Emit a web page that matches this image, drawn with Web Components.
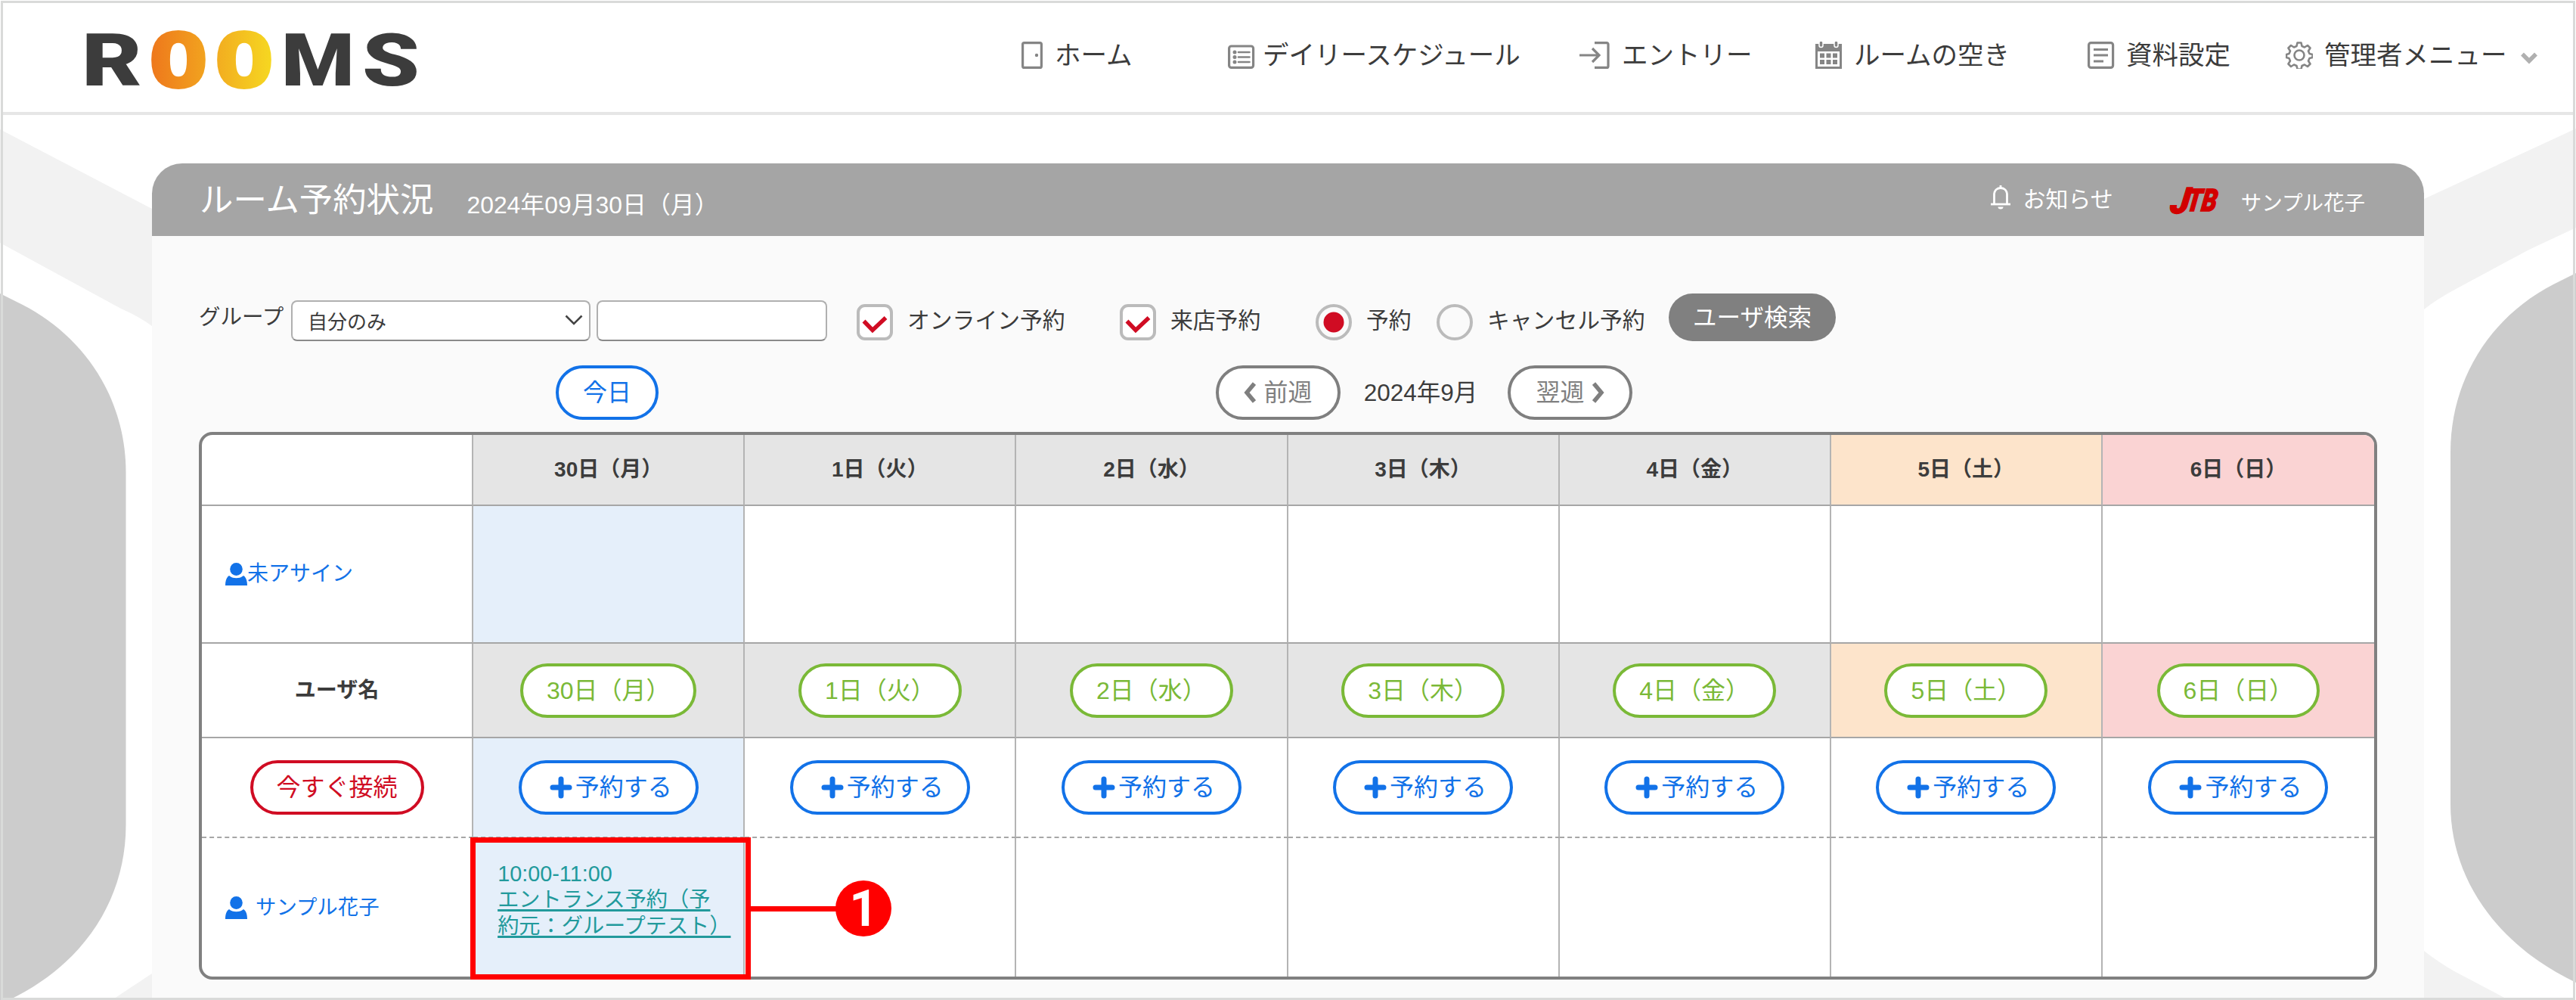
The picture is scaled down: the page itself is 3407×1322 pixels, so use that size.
<!DOCTYPE html>
<html lang="ja">
<head>
<meta charset="UTF-8">
<title>ROOMS</title>
<style>
  html, body {
    margin: 0;
    height: 1322px;
    overflow: hidden;
  }
  body {
    font-family: "Liberation Sans", "Noto Sans CJK JP", sans-serif;
    color: #3c3c3c;
    background: #fff;
    text-spacing-trim: space-all;
  }
</style>
</head>
<body>
<rooms-app></rooms-app>

<script>
const ICONS = {
  door: `<svg width="28" height="36" viewBox="0 0 28 36" fill="none" stroke="#858585" stroke-width="3.200"><rect x="1.6" y="1.6" width="24.800" height="32.800" rx="2"/><circle cx="20" cy="18" r="2.200" fill="#858585" stroke="none"/></svg>`,
  list: `<svg width="36" height="36" viewBox="0 0 36 36" fill="none" stroke="#858585" stroke-width="3.200"><rect x="1.6" y="6" width="32" height="28.400" rx="3"/><path d="M14 14h14.500M14 20.500h14.500M14 27h14.500" stroke-width="2.600" stroke-linecap="round"/><g fill="#858585" stroke="none"><circle cx="9" cy="14" r="2.500"/><circle cx="9" cy="20.500" r="2.500"/><circle cx="9" cy="27" r="2.500"/></g></svg>`,
  entry: `<svg width="40" height="36" viewBox="0 0 40 36" fill="none" stroke="#858585" stroke-width="3.200"><path d="M20 1.600h16a2 2 0 0 1 2 2v28.800a2 2 0 0 1-2 2H20"/><path d="M0 18h26M17 9l9 9-9 9"/></svg>`,
  calendar: `<svg width="36" height="36" viewBox="0 0 36 36"><path fill="#858585" d="M0 3h35v33H0z"/><path fill="#fff" d="M3 13h29v20H3z"/><g fill="#858585"><path d="M6 15.500h6v6H6zM14.500 15.500h6v6h-6zM23 15.500h6v6h-6zM6 24h6v6H6zM14.500 24h6v6h-6zM23 24h6v6h-6z"/></g><g fill="#858585" stroke="#fff" stroke-width="1.500"><rect x="5" y="-1" width="5" height="8.500" rx="2.500"/><rect x="25" y="-1" width="5" height="8.500" rx="2.500"/></g></svg>`,
  doc: `<svg width="36" height="36" viewBox="0 0 36 36" fill="none" stroke="#858585" stroke-width="3.200"><rect x="1.600" y="1.600" width="32" height="32.800" rx="3"/><path d="M8 10.500h19M8 18h19M8 26h13" stroke-width="3"/></svg>`,
  gear: `<svg width="36" height="36" viewBox="0 0 36 36" fill="none" stroke="#858585" stroke-width="2.600" stroke-linejoin="round"><circle cx="18" cy="18" r="6.500"/><path d="M15.500 1.500h5l1 4.500 3.500 1.500 4-2.500 3.500 3.500-2.500 4 1.500 3.500 4 1v4l-4 1-1.500 3.500 2.500 4-3.500 3.500-4-2.500-3.500 1.500-1 4.500h-5l-1-4.500-3.500-1.500-4 2.500L3.500 29.500l2.500-4L4.500 22l-3.500-1v-4l3.500-1L6 12.500l-2.500-4L7 5l4 2.500L14.500 6z"/></svg>`,
  down: `<svg width="22" height="16" viewBox="0 0 22 16" fill="none" stroke="#b0b0b0" stroke-width="5.500"><path d="M2 2.500l9 9 9-9"/></svg>`,
  bell: `<svg width="28" height="34" viewBox="0 0 28 34" fill="none" stroke="#fff" stroke-width="2.800"><path d="M5.500 25V13.500C5.500 8 9 4.500 14 4.500S22.500 8 22.500 13.500V25"/><path d="M1 26h26"/><path d="M14 1v4"/><path d="M10.500 29.500a3.500 3 0 0 0 7 0z" fill="#fff" stroke="none"/></svg>`,
  person: `<svg width="29" height="30" viewBox="0 0 29 30" fill="#1272e8"><ellipse cx="14.500" cy="8.500" rx="8.300" ry="8.500"/><path d="M0 30c0-6 1.500-11 5-13 2.500 2.200 5.500 3.200 9.500 3.200s7-1 9.500-3.200c3.500 2 5 7 5 13z"/></svg>`,
  plus: `<svg width="32" height="30" viewBox="0 0 32 30" stroke="#1272e8" stroke-width="7" stroke-linecap="round"><path d="M16 4v22M5 15h22"/></svg>`,
  left: `<svg width="16" height="28" viewBox="0 0 16 28" fill="none" stroke="#7f7f7f" stroke-width="5.500"><path d="M14 2L4 14l10 12"/></svg>`,
  right: `<svg width="16" height="28" viewBox="0 0 16 28" fill="none" stroke="#7f7f7f" stroke-width="5.500"><path d="M2 2l10 12L2 26"/></svg>`,
};

class UiIcon extends HTMLElement {
  connectedCallback() {
    this.attachShadow({ mode: "open" }).innerHTML = `
      <style>
        :host { display: inline-flex; flex: none; }
        svg { display: block; }
      </style>
      ${ICONS[this.getAttribute("name")]}
    `;
  }
}
customElements.define("ui-icon", UiIcon);

class BrandLogo extends HTMLElement {
  constructor() {
    super();
    this.attachShadow({ mode: "open" }).innerHTML = `
      <style>
        :host { display: block; }
        svg { display: block; overflow: visible; }
        text { font-family: Roboto, "Liberation Sans", sans-serif; font-weight: 900; }
        .o {
          font-family: "DejaVu Sans Mono", monospace;
          font-weight: 700;
          font-size: 98px;
          stroke-width: 4px;
          stroke-linejoin: round;
        }
      </style>
      <svg width="470" height="130" viewBox="0 -30 470 130">
        <defs>
          <linearGradient id="o1"><stop offset="0" stop-color="#ee761c"/><stop offset="1" stop-color="#f2a51f"/></linearGradient>
          <linearGradient id="o2"><stop offset="0" stop-color="#f2ab20"/><stop offset="1" stop-color="#f6d921"/></linearGradient>
        </defs>
        <g fill="#3c3c3c" font-size="96">
          <text x="8" y="76" textLength="80" lengthAdjust="spacingAndGlyphs">R</text>
          <text class="o" x="97" y="78" fill="url(#o1)" stroke="url(#o1)" textLength="78" lengthAdjust="spacingAndGlyphs">O</text>
          <text class="o" x="184" y="78" fill="url(#o2)" stroke="url(#o2)" textLength="78" lengthAdjust="spacingAndGlyphs">O</text>
          <text x="272" y="76" textLength="97" lengthAdjust="spacingAndGlyphs">M</text>
          <text x="379" y="76" textLength="76" lengthAdjust="spacingAndGlyphs">S</text>
        </g>
      </svg>
    `;
  }
}
customElements.define("brand-logo", BrandLogo);

class NavLink extends HTMLElement {
  connectedCallback() {
    this.attachShadow({ mode: "open" }).innerHTML = `
      <style>
        :host {
          display: flex;
          align-items: center;
          font-size: 34.500px;
          line-height: 40px;
          white-space: nowrap;
        }
        .icon { width: var(--icon-box, 51px); display: flex; }
        .caret { margin: 8px 0 0 18px; }
      </style>
      <span class="icon"><ui-icon name="${this.getAttribute("icon")}"></ui-icon></span>
      <slot></slot>
      ${this.hasAttribute("menu") ? `<ui-icon class="caret" name="down"></ui-icon>` : ""}
    `;
  }
}
customElements.define("nav-link", NavLink);

class AppHeader extends HTMLElement {
  constructor() {
    super();
    this.attachShadow({ mode: "open" }).innerHTML = `
      <style>
        :host {
          display: flex;
          justify-content: space-between;
          height: 144px;
          background: #fff;
          border-bottom: 4px solid #e6e6e6;
          box-sizing: content-box;
        }
        brand-logo { margin: 3px 0 0 96px; }
        nav {
          display: grid;
          grid-template-columns: 273px 465px 312px 360px 262px 380px;
          align-items: center;
          height: 38px;
          margin-top: 49px;
        }
      </style>
      <brand-logo></brand-logo>
      <nav>
        <nav-link icon="door" style="--icon-box:44px">ホーム</nav-link>
        <nav-link icon="list" style="--icon-box:46px">デイリースケジュール</nav-link>
        <nav-link icon="entry" style="--icon-box:56px">エントリー</nav-link>
        <nav-link icon="calendar">ルームの空き</nav-link>
        <nav-link icon="doc">資料設定</nav-link>
        <nav-link icon="gear" menu>管理者メニュー</nav-link>
      </nav>
    `;
  }
}
customElements.define("app-header", AppHeader);

// decorative walls on both sides of the panel
class RoomBackdrop extends HTMLElement {
  constructor() {
    super();
    this.attachShadow({ mode: "open" }).innerHTML = `
      <style>
        :host { position: absolute; inset: 0; z-index: 0; }
        svg { display: block; }
      </style>
      <svg width="3407" height="1322" viewBox="0 0 3407 1322">
        <g fill="#f2f2f2">
          <path d="M0 171L201 276V431Q185 419 160 408L0 321z"/>
          <path d="M148 1322L201 1287V1322z"/>
          <path d="M3407 170L3206 263V409Q3222 396 3250 381L3345 330L3407 301z"/>
          <path d="M3206 1257Q3222 1270 3246 1284L3318 1322H3206z"/>
        </g>
        <g fill="#ccc">
          <path d="M0 388L30 403C110 444 166.500 525 166.500 625V1090C166.500 1190 110 1275 12 1322H0z"/>
          <path d="M3407 361L3377 376C3297 417 3241 498 3241 598V1063C3241 1163 3304 1250 3407 1299z"/>
        </g>
      </svg>
    `;
  }
}
customElements.define("room-backdrop", RoomBackdrop);

class PillButton extends HTMLElement {
  constructor() {
    super();
    this.attachShadow({ mode: "open" }).innerHTML = `
      <style>
        :host {
          display: inline-flex;
          align-items: center;
          justify-content: center;
          box-sizing: border-box;
          height: 72px;
          padding: 0 31px;
          border: 4px solid currentColor;
          border-radius: 36px;
          background: #fff;
          color: #1272e8;
          font-size: 32px;
          line-height: 40px;
          white-space: nowrap;
        }
        :host([tone="green"]) { color: #7ab937; }
        :host([tone="red"]) { color: #d00c23; }
        :host([tone="gray"]) { color: #7f7f7f; }
        :host([tone="solid"]) {
          height: 63px;
          border: 0;
          background: #808080;
          color: #fff;
          font-size: 31.500px;
        }
      </style>
      <slot></slot>
    `;
  }
}
customElements.define("pill-button", PillButton);

class ChoiceBox extends HTMLElement {
  connectedCallback() {
    const radio = this.getAttribute("type") === "radio";
    const on = this.hasAttribute("checked");
    const mark = radio
      ? `<circle cx="20" cy="20" r="13.500" fill="#d00c23"/>`
      : `<path d="M5.500 18.500l11.500 12L34.500 14" fill="none" stroke="#d00c23" stroke-width="5.500"/>`;
    this.attachShadow({ mode: "open" }).innerHTML = `
      <style>
        :host {
          display: flex;
          align-items: center;
          font-size: 29.800px;
          line-height: 36px;
          white-space: nowrap;
        }
        .box {
          box-sizing: border-box;
          width: 48px;
          height: 48px;
          margin-right: 19px;
          border: 4px solid #bbb;
          border-radius: ${radio ? "50%" : "11px"};
          background: ${radio ? "#fafafa" : "#fff"};
        }
        svg { display: block; }
        .label { margin-top: -5px; }
      </style>
      <span class="box"><svg width="40" height="40">${on ? mark : ""}</svg></span>
      <span class="label"><slot></slot></span>
    `;
  }
}
customElements.define("choice-box", ChoiceBox);

class FilterBar extends HTMLElement {
  constructor() {
    super();
    this.attachShadow({ mode: "open" }).innerHTML = `
      <style>
        :host {
          display: flex;
          height: 63px;
          align-items: flex-start;
        }
        .label {
          width: 122px;
          margin-top: 13px;
          font-size: 28.500px;
          line-height: 36px;
        }
        .select, .input {
          display: flex;
          align-items: center;
          justify-content: space-between;
          box-sizing: border-box;
          height: 54px;
          margin-top: 9px;
          border: 2px solid #b0b0b0;
          border-bottom-color: #8a8a8a;
          border-radius: 8px;
          background: #fff;
          font-size: 26px;
        }
        .select { width: 396px; padding: 0 8px 2px 20px; margin-right: 8px; }
        .input { width: 305px; }
        choice-box { margin-top: 14px; }
        pill-button { width: 221px; }
      </style>
      <span class="label">グループ</span>
      <span class="select">自分のみ
        <svg width="24" height="14" viewBox="0 0 24 14" fill="none" stroke="#444" stroke-width="2.600"><path d="M1.500 1.500L12 12 22.500 1.500"/></svg>
      </span>
      <span class="input"></span>
      <choice-box checked style="width:348px;margin-left:39px">オンライン予約</choice-box>
      <choice-box checked style="width:259px">来店予約</choice-box>
      <choice-box type="radio" checked style="width:160px">予約</choice-box>
      <choice-box type="radio" style="width:307px">キャンセル予約</choice-box>
      <pill-button tone="solid">ユーザ検索</pill-button>
    `;
  }
}
customElements.define("filter-bar", FilterBar);

class WeekNav extends HTMLElement {
  constructor() {
    super();
    this.attachShadow({ mode: "open" }).innerHTML = `
      <style>
        :host {
          display: flex;
          align-items: center;
          height: 72px;
          font-size: 32px;
          line-height: 40px;
        }
        .today { margin-left: 472px; width: 136px; }
        .step { width: 165px; }
        .prev { margin-left: 737px; }
        .month {
          width: 212px;
          padding-right: 9px;
          text-align: center;
          white-space: nowrap;
          font-size: 31.500px;
        }
      </style>
      <pill-button class="today">今日</pill-button>
      <pill-button class="step prev" tone="gray"><ui-icon name="left" style="margin-right:10px"></ui-icon>前週</pill-button>
      <span class="month">2024年9月</span>
      <pill-button class="step" tone="gray">翌週<ui-icon name="right" style="margin-left:10px"></ui-icon></pill-button>
    `;
  }
}
customElements.define("week-nav", WeekNav);

class CallOut extends HTMLElement {
  constructor() {
    super();
    this.attachShadow({ mode: "open" }).innerHTML = `
      <style>
        :host {
          position: absolute;
          left: -4px;
          top: -1px;
          display: flex;
          align-items: center;
          width: 557px;
          height: 188px;
        }
        .frame {
          box-sizing: border-box;
          width: 371px;
          height: 188px;
          border: 7px solid #f00;
        }
        .line { width: 114px; height: 7px; background: #f00; }
        .num {
          width: 74px;
          height: 74px;
          margin-left: -2px;
          border-radius: 50%;
          background: #f00;
          color: #fff;
          font: 700 66px/76px Roboto, sans-serif;
          text-align: center;
        }
      </style>
      <div class="frame"></div><div class="line"></div><div class="num"><slot></slot></div>
    `;
  }
}
customElements.define("call-out", CallOut);

class WeekGrid extends HTMLElement {
  constructor() {
    super();
    this.attachShadow({ mode: "open" });
  }

  connectedCallback() {
    const days = [
      { label: "30日（月）", cls: "day" },
      { label: "1日（火）", cls: "day" },
      { label: "2日（水）", cls: "day" },
      { label: "3日（木）", cls: "day" },
      { label: "4日（金）", cls: "day" },
      { label: "5日（土）", cls: "sat" },
      { label: "6日（日）", cls: "sun" },
    ];
    const today = (i) => (i === 0 ? "today" : "");
    const event = `
      <div class="event">
        <div class="time">10:00-11:00</div>
        <a>エントランス予約（予<br>約元：グループテスト）</a>
      </div>
      <call-out>1</call-out>`;

    this.shadowRoot.innerHTML = `
      <style>
        :host {
          display: grid;
          grid-template-columns: repeat(8, 1fr);
          grid-template-rows: 94px 182px 125px 132px 183px;
          box-sizing: border-box;
          width: 2881px;
          border: 4px solid #808080;
          border-radius: 18px;
          background: #fff;
        }
        .cell {
          position: relative;
          display: flex;
          align-items: center;
          justify-content: center;
          box-sizing: border-box;
          border-right: 2px solid #b4b4b4;
          border-bottom: 2px solid #a6a6a6;
          font-size: 28px;
          line-height: 34px;
          white-space: nowrap;
        }
        .cell:nth-of-type(8n) { border-right: 0; }
        .cell:nth-of-type(8) { border-top-right-radius: 14px; }
        .head { font-weight: 700; }
        .day { background: #e5e5e5; }
        .sat { background: #fde4cb; }
        .sun { background: #fad3d3; }
        .today { background: #e5effa; }
        .dash { border-bottom: 2px dashed #a6a6a6; }
        .last { border-bottom: 0; }
        .user { justify-content: flex-start; padding-left: 31px; color: #1272e8; }
        .user .name { margin-left: 11px; font-size: 27.400px; }
        .event {
          align-self: flex-start;
          width: 100%;
          padding: 30px 0 0 32px;
          font-size: 28.200px;
          line-height: 34.300px;
          color: #229a9c;
        }
        .time { font-size: 28.800px; }
        a {
          text-decoration: underline;
          text-decoration-thickness: 2.500px;
          text-underline-offset: 3px;
        }
      </style>
      <div class="cell"></div>
      ${days.map((d) => `<div class="cell head ${d.cls}">${d.label}</div>`).join("")}
      <div class="cell user"><ui-icon name="person"></ui-icon>未アサイン</div>
      ${days.map((d, i) => `<div class="cell ${today(i)}"></div>`).join("")}
      <div class="cell head">ユーザ名</div>
      ${days.map((d) => `<div class="cell ${d.cls}"><pill-button tone="green">${d.label}</pill-button></div>`).join("")}
      <div class="cell dash"><pill-button tone="red">今すぐ接続</pill-button></div>
      ${days.map((d, i) => `<div class="cell dash ${today(i)}"><pill-button><ui-icon name="plus" style="margin:0 3px 0 5px"></ui-icon>予約する</pill-button></div>`).join("")}
      <div class="cell last user" style="border-bottom-left-radius:14px"><ui-icon name="person"></ui-icon><span class="name">サンプル花子</span></div>
      ${days.map((d, i) => `<div class="cell last ${today(i)}"${i === 6 ? ` style="border-bottom-right-radius:14px"` : ""}>${i === 0 ? event : ""}</div>`).join("")}
    `;
  }
}
customElements.define("week-grid", WeekGrid);

class RoomPanel extends HTMLElement {
  constructor() {
    super();
    this.attachShadow({ mode: "open" }).innerHTML = `
      <style>
        :host {
          display: block;
          position: relative;
          z-index: 1;
          box-sizing: border-box;
          width: 3005px;
          height: 1110px;
          border-radius: 40px 40px 0 0;
          background: #fafafa;
          overflow: hidden;
        }
        header {
          display: flex;
          align-items: center;
          height: 96px;
          padding: 0 78px 0 63px;
          background: #a5a5a5;
          color: #fff;
          white-space: nowrap;
        }
        h1 { margin: 2px 44px 0 0; font-size: 44.400px; line-height: 60px; font-weight: 400; }
        .date { margin-top: 8px; font-size: 31.900px; }
        .news {
          display: flex;
          align-items: center;
          gap: 15px;
          margin: -7px 0 0 auto;
          font-size: 30px;
        }
        .jtb { display: block; margin: 6px 31px 0 74px; overflow: visible; }
        .jtb text { font-family: Roboto, sans-serif; font-style: italic; font-weight: 900; }
        .name { margin-top: 3px; font-size: 27.500px; }
        main { padding: 76px 62px 0; }
        week-nav { margin: 32px 0 16px; }
      </style>
      <header>
        <h1>ルーム予約状況</h1>
        <span class="date">2024年09月30日（月）</span>
        <span class="news"><ui-icon name="bell"></ui-icon>お知らせ</span>
        <svg class="jtb" width="64" height="70" viewBox="0 -16 64 70">
          <g fill="#d20000" stroke="#d20000" stroke-width="1.500" transform="translate(6 0) skewX(-8)">
            <text x="-1" y="34" font-size="48" textLength="25" lengthAdjust="spacingAndGlyphs">J</text>
            <text x="20" y="31" font-size="41" textLength="40" lengthAdjust="spacingAndGlyphs">TB</text>
          </g>
        </svg>
        <span class="name">サンプル花子</span>
      </header>
      <main>
        <filter-bar></filter-bar>
        <week-nav></week-nav>
        <week-grid></week-grid>
      </main>
    `;
  }
}
customElements.define("room-panel", RoomPanel);

class RoomsApp extends HTMLElement {
  constructor() {
    super();
    this.attachShadow({ mode: "open" }).innerHTML = `
      <style>
        :host {
          display: block;
          position: relative;
          box-sizing: border-box;
          width: 3407px;
          height: 1322px;
          padding: 4px;
          overflow: hidden;
        }
        app-header { position: relative; z-index: 1; }
        room-panel { margin: 64px 0 0 197px; }
        .edge {
          position: absolute;
          inset: 1px 1px 0;
          z-index: 2;
          border: 3px solid #d9dad9;
          pointer-events: none;
        }
      </style>
      <room-backdrop></room-backdrop>
      <app-header></app-header>
      <room-panel></room-panel>
      <div class="edge"></div>
    `;
  }
}
customElements.define("rooms-app", RoomsApp);
</script>
</body>
</html>
